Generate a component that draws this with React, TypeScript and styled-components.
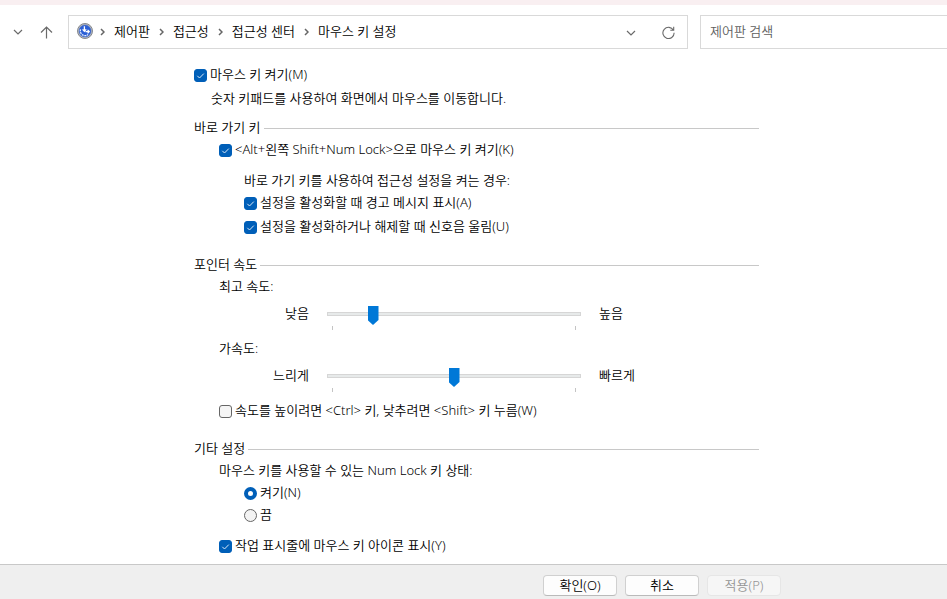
import React from "react";
import styled, { createGlobalStyle } from "styled-components";

const GlobalStyle = createGlobalStyle`
  *, *::before, *::after { box-sizing: border-box; }
  body {
    margin: 0;
    background: #fff;
    color: #000;
    font-family: "Noto Sans", "Noto Sans CJK KR", sans-serif;
    font-size: 13px;
    font-weight: 350;
    line-height: 18px;
  }
  button, input { font: inherit; color: inherit; }
`;

const Page = styled.div`
  min-height: 100vh;
  display: flex;
  flex-direction: column;
`;

const TitleStrip = styled.div`
  height: 5px;
  background: #f9eff1;
`;

const Toolbar = styled.header`
  display: flex;
  align-items: center;
  padding: 10px 0 0 10px;
`;

const IconButton = styled.button`
  display: flex;
  align-items: center;
  justify-content: center;
  width: 16px;
  height: 20px;
  padding: 0;
  border: 0;
  background: none;
  color: #6a6a6a;
`;

const NavButtons = styled.div`
  display: flex;
  gap: 12px;
  width: 58px;
`;

const AddressBar = styled.nav`
  flex: 1;
  min-width: 0;
  height: 34px;
  display: flex;
  align-items: center;
  padding: 0 11px 2px 8px;
  border: 1px solid #d9d9d9;
`;

const Crumbs = styled.ol`
  flex: 1;
  display: flex;
  align-items: center;
  margin: 0;
  padding: 0;
  list-style: none;
  white-space: nowrap;
`;

const Crumb = styled.li`
  display: flex;
  align-items: center;
  svg { margin: 2px 9px 0 7px; }
  & + & svg { margin-left: 9px; }
  a { color: #000; text-decoration: none; }
`;

const AddressActions = styled.div`
  display: flex;
  gap: 21px;
  padding-top: 3px;
`;

const SearchBox = styled.input`
  width: 247px;
  height: 34px;
  margin-left: 12px;
  padding: 0 9px 2px;
  border: 1px solid #d9d9d9;
  border-right: 0;
  border-radius: 0;
  outline: 0;
  background: #fff;
  &::placeholder { color: #606060; opacity: 1; }
`;

const Centered = styled.div`
  padding-left: 6px;
  display: flex;
  justify-content: center;
`;

const Form = styled.main`
  width: 100%;
  max-width: 565px;
  padding: 16px 0 10px;
`;

const Group = styled.fieldset`
  margin: 0;
  padding: 0;
  border: 0;
  min-width: 0;
`;

const Legend = styled.legend`
  width: 100%;
  display: flex;
  align-items: center;
  gap: 3px;
  padding: 0;
  &::after {
    content: "";
    flex: 1;
    height: 1px;
    margin-top: 2px;
    background: #c8c8c8;
  }
`;

const Row = styled.div<{ $level?: number; $gap?: number }>`
  display: flex;
  margin-top: ${(p) => p.$gap ?? 4}px;
  padding-left: ${(p) => (p.$level ?? 0) * 25}px;
`;

const Section = styled.div<{ $gap: number }>`
  margin-top: ${(p) => p.$gap}px;
`;

const Description = styled.p`
  margin: 6px 0 0;
  padding-left: 17px;
`;

const Choice = styled.label`
  display: flex;
  align-items: center;
  gap: 3px;
`;

const checkMark =
  "data:image/svg+xml,%3Csvg xmlns='http://www.w3.org/2000/svg' viewBox='0 0 13 13'%3E%3Cpath d='M3.3 6.8 5.5 9 9.8 4.6' fill='none' stroke='%23d9e8f7' stroke-width='1'/%3E%3C/svg%3E";

const CheckInput = styled.input.attrs({ type: "checkbox" })`
  appearance: none;
  flex: none;
  width: 13px;
  height: 13px;
  margin: 2px 0 0;
  border: 1px solid #666;
  border-radius: 3px;
  background: #f5f5f5;
  &:checked {
    border-color: #005fb8;
    background: #005fb8 url("${checkMark}") center / 13px 13px no-repeat;
  }
`;

const RadioInput = styled.input.attrs({ type: "radio" })`
  appearance: none;
  flex: none;
  width: 13px;
  height: 13px;
  margin: 2px 0 0;
  border: 1px solid #666;
  border-radius: 50%;
  background: #f3f3f3;
  &:checked {
    border: 4px solid #005fb8;
    background: #fff;
  }
`;

const SliderRow = styled.div<{ $gap: number }>`
  display: grid;
  grid-template-columns: 115px minmax(0, 254px) auto;
  column-gap: 18px;
  height: 26px;
  margin-top: ${(p) => p.$gap}px;
  line-height: 16px;
`;

const LowLabel = styled.span`
  text-align: right;
`;

const RangeInput = styled.input.attrs({ type: "range" })`
  appearance: none;
  display: block;
  width: 100%;
  height: 18px;
  margin: 0;
  background: none;
  &::-webkit-slider-runnable-track {
    height: 4px;
    background: #e7eaea;
    box-shadow: inset 0 0 0 1px #d6d6d6;
  }
  &::-webkit-slider-thumb {
    appearance: none;
    width: 11px;
    height: 19px;
    margin-top: -6px;
    background: #0078d7;
    clip-path: polygon(0 0, 100% 0, 100% 14px, 50% 100%, 0 14px);
  }
`;

const Ticks = styled.div`
  display: flex;
  justify-content: space-between;
  height: 4px;
  margin: 3px 5px 0;
  border: solid #c4c4c4;
  border-width: 0 1px;
`;

const Footer = styled.footer`
  flex: 1;
  padding: 10px 0 2px;
  border-top: 1px solid #c8c8c8;
  background: #efefef;
`;

const FooterButtons = styled.div`
  width: 100%;
  max-width: 609px;
  display: flex;
  justify-content: flex-end;
  gap: 8px;
`;

const DialogButton = styled.button`
  width: 74px;
  height: 21px;
  padding: 0 0 1px;
  border: 1px solid #d0d0d0;
  border-bottom-color: #bababa;
  border-radius: 4px;
  background: #fdfdfd;
  line-height: 18px;
  &:disabled {
    color: #949494;
    border-color: #e6e6e6;
    background: #f6f6f6;
  }
`;

const ChevronDown = () => (
  <svg width="10" height="6" viewBox="0 0 10 6" fill="none" stroke="currentColor" strokeWidth="1.2">
    <path d="M1 1l4 4 4-4" />
  </svg>
);

const ArrowUp = () => (
  <svg width="13" height="13" viewBox="0 0 13 13" fill="none" stroke="currentColor" strokeWidth="1.2">
    <path d="M6.5 12.5V1M1 6.5L6.5 1 12 6.5" />
  </svg>
);

const ChevronRight = () => (
  <svg width="5" height="8" viewBox="0 0 5 8" fill="none" stroke="#666" strokeWidth="1.5">
    <path d="M1 1l3 3-3 3" />
  </svg>
);

const Refresh = () => (
  <svg width="13" height="13" viewBox="0 0 13 13" fill="none" stroke="currentColor" strokeWidth="1.1">
    <path d="M11.4 4.2A5.6 5.6 0 1 0 12.1 6.8M11.7 0.8V4.2H8.3" />
  </svg>
);

const AccessCenterIcon = () => (
  <svg width="16" height="16" viewBox="0 0 16 16">
    <circle cx="8" cy="8" r="7.5" fill="#b9bcc2" stroke="#85888e" />
    <circle cx="8" cy="8" r="6" fill="#2b5fd6" stroke="#4a6dba" strokeWidth="0.5" />
    <path d="M3.6 6.4a4.6 4.6 0 0 0 7.4 5" fill="none" stroke="#e6eeff" strokeWidth="1.3" strokeDasharray="2 0.7" />
    <path d="M7.4 3.2v4.6M5.6 6.4l1.8 2 1.8-2" fill="none" stroke="#fff" strokeWidth="1.3" />
    <path d="M8.5 8.6h3.6M10.6 6.8l1.7 1.8-1.7 1.8" fill="none" stroke="#fff" strokeWidth="1.2" />
  </svg>
);

const crumbs = ["제어판", "접근성", "접근성 센터", "마우스 키 설정"];

function Check({ label, on = true }: { label: string; on?: boolean }) {
  return (
    <Choice>
      <CheckInput defaultChecked={on} />
      {label}
    </Choice>
  );
}

interface SpeedProps {
  name: string;
  low: string;
  high: string;
  value: number;
  gap: number;
}

function SpeedSlider({ name, low, high, value, gap }: SpeedProps) {
  return (
    <SliderRow $gap={gap}>
      <LowLabel>{low}</LowLabel>
      <div>
        <RangeInput aria-label={name} min={0} max={6} defaultValue={value} />
        <Ticks />
      </div>
      <span>{high}</span>
    </SliderRow>
  );
}

export default function App() {
  return (
    <Page>
      <GlobalStyle />
      <TitleStrip />
      <Toolbar>
        <NavButtons>
          <IconButton aria-label="최근 위치"><ChevronDown /></IconButton>
          <IconButton aria-label="위로"><ArrowUp /></IconButton>
        </NavButtons>
        <AddressBar>
          <AccessCenterIcon />
          <Crumbs>
            {crumbs.map((c) => (
              <Crumb key={c}>
                <ChevronRight />
                <a href="#">{c}</a>
              </Crumb>
            ))}
          </Crumbs>
          <AddressActions>
            <IconButton aria-label="이전 위치"><ChevronDown /></IconButton>
            <IconButton aria-label="새로 고침"><Refresh /></IconButton>
          </AddressActions>
        </AddressBar>
        <SearchBox type="text" aria-label="제어판 검색" placeholder="제어판 검색" />
      </Toolbar>

      <Centered>
        <Form>
          <Check label="마우스 키 켜기(M)" />
          <Description>숫자 키패드를 사용하여 화면에서 마우스를 이동합니다.</Description>

          <Section $gap={11}>
            <Group>
              <Legend>바로 가기 키</Legend>
              <Row $level={1}><Check label="<Alt+왼쪽 Shift+Num Lock>으로 마우스 키 켜기(K)" /></Row>
              <Row $level={2} $gap={13}>바로 가기 키를 사용하여 접근성 설정을 켜는 경우:</Row>
              <Row $level={2}><Check label="설정을 활성화할 때 경고 메시지 표시(A)" /></Row>
              <Row $level={2} $gap={6}><Check label="설정을 활성화하거나 해제할 때 신호음 울림(U)" /></Row>
            </Group>
          </Section>

          <Section $gap={20}>
            <Group>
              <Legend>포인터 속도</Legend>
              <Row $level={1}>최고 속도:</Row>
              <SpeedSlider name="최고 속도" low="낮음" high="높음" value={1} gap={10} />
              <Row $level={1} $gap={8}>가속도:</Row>
              <SpeedSlider name="가속도" low="느리게" high="빠르게" value={3} gap={10} />
              <Row $level={1} $gap={8}>
                <Check on={false} label="속도를 높이려면 <Ctrl> 키, 낮추려면 <Shift> 키 누름(W)" />
              </Row>
            </Group>
          </Section>

          <Section $gap={20}>
            <Group>
              <Legend>기타 설정</Legend>
              <Row $level={1}>마우스 키를 사용할 수 있는 Num Lock 키 상태:</Row>
              <Row $level={2}>
                <Choice><RadioInput name="numlock" defaultChecked />켜기(N)</Choice>
              </Row>
              <Row $level={2}>
                <Choice><RadioInput name="numlock" />끔</Choice>
              </Row>
              <Row $level={1} $gap={13}><Check label="작업 표시줄에 마우스 키 아이콘 표시(Y)" /></Row>
            </Group>
          </Section>
        </Form>
      </Centered>

      <Footer>
        <Centered>
          <FooterButtons>
            <DialogButton>확인(O)</DialogButton>
            <DialogButton>취소</DialogButton>
            <DialogButton disabled>적용(P)</DialogButton>
          </FooterButtons>
        </Centered>
      </Footer>
    </Page>
  );
}
